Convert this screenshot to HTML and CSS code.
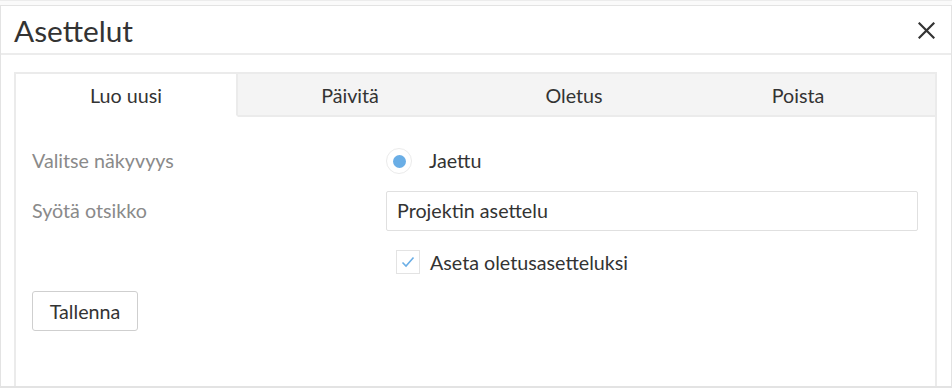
FILE: index.html
```html
<!DOCTYPE html>
<html lang="fi">
<head>
<meta charset="utf-8">
<link rel="stylesheet" href="styles.css">
</head>
<body>
<div class="backdrop"></div>
<div class="dialog">
  <div class="dialog-header">
    <h1 class="dialog-title">Asettelut</h1>
    <button class="close" aria-label="Sulje">
      <svg width="17" height="17" viewBox="0 0 17 17"><path d="M1.5 1.5 L15.5 15.5 M15.5 1.5 L1.5 15.5" stroke="#333" stroke-width="2.2" stroke-linecap="square" fill="none"/></svg>
    </button>
  </div>
  <div class="dialog-body">
    <div class="tabs">
      <div class="tab-bar">
        <div class="tab active">Luo uusi</div>
        <div class="tab">Päivitä</div>
        <div class="tab">Oletus</div>
        <div class="tab">Poista</div>
        <div class="tab-fill"></div>
      </div>
      <div class="tab-panel">
        <div class="form-row row-radio">
          <div class="label">Valitse näkyvyys</div>
          <div class="field">
            <span class="radio"><span class="radio-dot"></span></span>
            <span class="radio-text">Jaettu</span>
          </div>
        </div>
        <div class="form-row row-input">
          <div class="label">Syötä otsikko</div>
          <div class="field">
            <div class="input">Projektin asettelu</div>
          </div>
        </div>
        <div class="form-row row-check">
          <div class="label"></div>
          <div class="field">
            <span class="checkbox">
              <svg width="14" height="12" viewBox="0 0 14 12"><path d="M1.5 6.5 L5 10 L12.5 1.5" stroke="#6aaee6" stroke-width="1.6" fill="none"/></svg>
            </span>
            <span class="check-text">Aseta oletusasetteluksi</span>
          </div>
        </div>
        <button class="btn">Tallenna</button>
      </div>
    </div>
  </div>
</div>
</body>
</html>
```
FILE: styles.css
```css
html, body {
  margin: 0;
  padding: 0;
  background: #fff;
  font-family: Lato, "Open Sans", sans-serif;
  color: #333;
}
.backdrop {
  height: 4px;
  border-top: 1px solid #ececec;
  background: #fafafa;
}
.dialog {
  width: 952px;
  height: 383px;
  box-sizing: border-box;
  border: 1px solid #e3e3e3;
  border-bottom: 2px solid #e3e3e3;
  background: #fff;
  display: flex;
  flex-direction: column;
}
.dialog-header {
  height: 49px;
  flex: none;
  box-sizing: border-box;
  border-bottom: 2px solid #ececec;
  display: flex;
  align-items: center;
  justify-content: space-between;
  padding: 0 15px 0 13px;
}
.dialog-title {
  margin: 0;
  font-size: 29.8px;
  font-weight: 400;
  color: #333;
  line-height: 1;
  padding-top: 2px;
}
.close {
  border: 0;
  background: none;
  padding: 0;
  width: 19px;
  height: 19px;
  display: flex;
  align-items: center;
  justify-content: center;
  margin-top: 1px;
}
.dialog-body {
  flex: 1;
  padding: 17px 14px 0 13px;
  display: flex;
}
.tabs {
  flex: 1;
  border: 2px solid #ebebeb;
  border-bottom: 0;
  display: flex;
  flex-direction: column;
}
.tab-bar {
  display: flex;
  height: 43px;
  flex: none;
  background: #f4f4f4;
}
.tab {
  width: 222px;
  flex: none;
  display: flex;
  align-items: center;
  justify-content: center;
  font-size: 19.7px;
  color: #333;
  border-bottom: 2px solid #ebebeb;
  box-sizing: border-box;
  padding-top: 1px;
}
.tab + .tab {
  width: 224px;
}
.tab.active {
  background: #fff;
  border-bottom-color: #fff;
  border-right: 2px solid #ebebeb;
}
.tab-fill {
  flex: 1;
  border-bottom: 2px solid #ebebeb;
}
.tab-panel {
  flex: 1;
  padding: 31px 17px 0 16px;
}
.form-row {
  display: flex;
  align-items: center;
}
.row-radio {
  height: 26px;
}
.row-input {
  margin-top: 17px;
  height: 40px;
}
.row-check {
  margin-top: 19px;
  height: 24px;
  margin-bottom: 17px;
}
.label {
  width: 354px;
  flex: none;
  font-size: 19.7px;
  color: #8a8a8a;
  padding-bottom: 2px;
}
.field {
  flex: 1;
  display: flex;
  align-items: center;
}
.radio {
  width: 26px;
  height: 26px;
  box-sizing: border-box;
  border: 1px solid #ebebeb;
  border-radius: 50%;
  display: flex;
  align-items: center;
  justify-content: center;
  margin-right: 17px;
}
.radio-dot {
  width: 13px;
  height: 13px;
  border-radius: 50%;
  background: #6aaee6;
}
.radio-text {
  font-size: 19.7px;
  color: #333;
  padding-bottom: 2px;
}
.input {
  flex: 1;
  height: 40px;
  box-sizing: border-box;
  border: 1px solid #e0e0e0;
  border-radius: 2px;
  padding: 0 10px 1px;
  display: flex;
  align-items: center;
  font-size: 19.7px;
  color: #333;
}
.row-check .field {
  padding-left: 10px;
}
.checkbox {
  width: 24px;
  height: 24px;
  box-sizing: border-box;
  border: 1px solid #e3e3e3;
  display: flex;
  align-items: center;
  justify-content: center;
  margin-right: 10px;
}
.check-text {
  font-size: 19.7px;
  color: #333;
}
.btn {
  display: block;
  width: 106px;
  height: 40px;
  border: 1px solid #cfcfcf;
  border-radius: 3px;
  background: #fff;
  font-family: Lato, "Open Sans", sans-serif;
  font-size: 19.7px;
  color: #333;
  padding: 0;
}
```
